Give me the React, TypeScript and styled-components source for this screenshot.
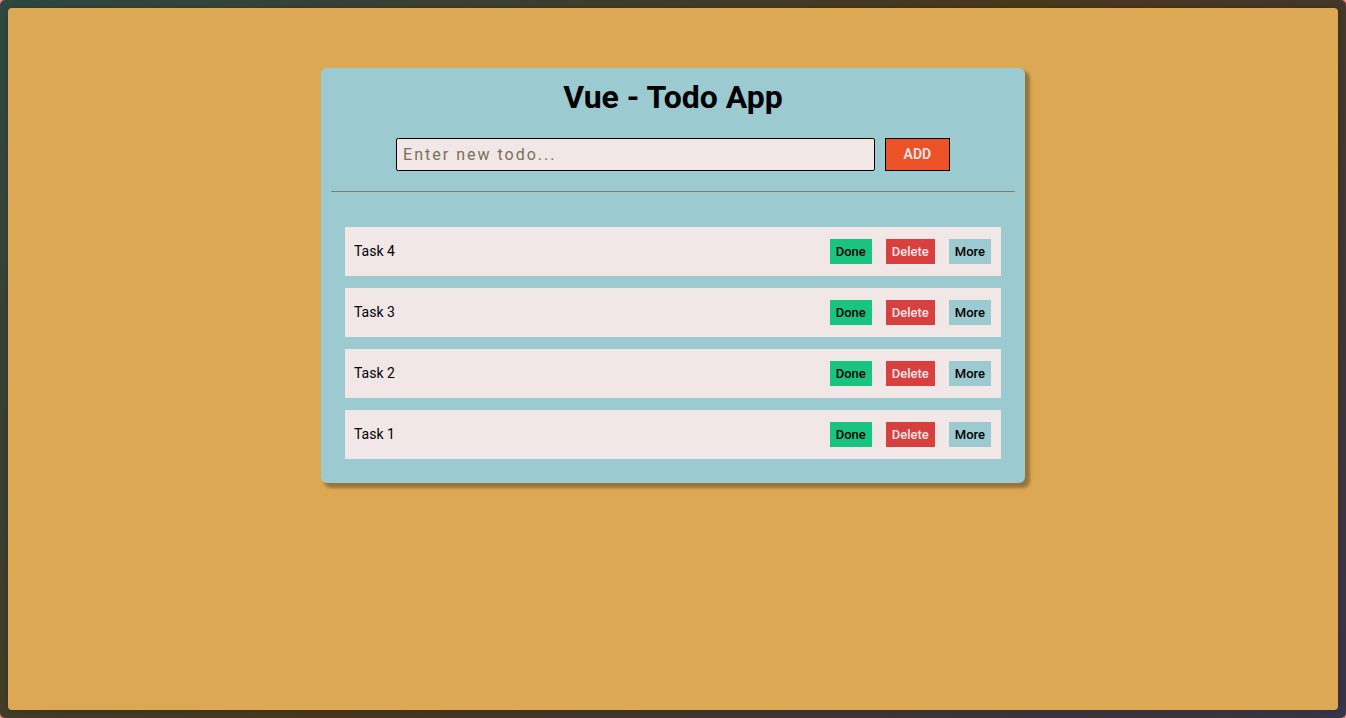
import React from "react";
import styled, { createGlobalStyle } from "styled-components";

const GlobalStyle = createGlobalStyle`
  * { box-sizing: border-box; }
  body {
    margin: 0;
    background: #f28b94;
    font-family: Roboto, "Liberation Sans", sans-serif;
    color: #000;
  }
`;

const Frame = styled.div`
  display: flex;
  min-height: 100vh;
  padding: 8px;
  border-radius: 5px;
  background: linear-gradient(135deg, #2f4842 0%, #4a381c 50%, #39354a 100%);
`;

const Page = styled.main`
  flex: 1;
  padding: 60px 16px;
  border-radius: 4px;
  background: #dca853;
  box-shadow: 0 0 8px rgba(0, 0, 0, 0.2);
`;

const Card = styled.section`
  max-width: 704px;
  margin: 0 auto;
  padding: 10px 10px 24px;
  border-radius: 6px;
  background: #9bcbd0;
  box-shadow: 4px 4px 3px 1px rgba(0, 0, 0, 0.3);
`;

const Title = styled.h1`
  margin: 0;
  font-size: 32px;
  line-height: 38px;
  font-weight: 700;
  text-align: center;
`;

const Form = styled.form`
  display: flex;
  justify-content: center;
  gap: 10px;
  margin: 22px 0 20px;
`;

const TodoInput = styled.input`
  width: 70%;
  height: 33px;
  padding: 0 6px;
  border: 1px solid #000;
  border-radius: 2px;
  background: #f1e7e6;
  font: 400 16px/20px Roboto, "Liberation Sans", sans-serif;
  letter-spacing: 2px;
  &::placeholder { color: #787058; opacity: 1; }
`;

const AddButton = styled.button`
  width: 65px;
  height: 33px;
  padding: 0 0 2px;
  border: 1px solid #000;
  background: #eb5228;
  color: #f1e7e6;
  font: 600 14px/16px Roboto, "Liberation Sans", sans-serif;
`;

const Divider = styled.hr`
  height: 2px;
  margin: 0;
  border: 0;
  border-top: 1px solid #75837f;
  border-bottom: 1px solid #b9c5b0;
`;

const TaskList = styled.ul`
  display: grid;
  gap: 12px;
  margin: 34px 14px 0;
  padding: 0;
  list-style: none;
`;

const Task = styled.li`
  display: flex;
  align-items: center;
  justify-content: space-between;
  height: 49px;
  padding: 0 10px 0 9px;
  background: #f1e7e6;
`;

const TaskName = styled.span`
  padding-bottom: 2px;
  font-size: 14px;
  line-height: 16px;
`;

const Actions = styled.div`
  display: flex;
  gap: 14px;
`;

const ActionButton = styled.button<{ $bg: string; $color?: string }>`
  height: 25px;
  padding: 0 6px;
  border: 0;
  background: ${(p) => p.$bg};
  color: ${(p) => p.$color ?? "#000"};
  font: 500 13px/15px Roboto, "Liberation Sans", sans-serif;
`;

const tasks = ["Task 4", "Task 3", "Task 2", "Task 1"];

export default function App() {
  return (
    <>
      <GlobalStyle />
      <Frame>
        <Page>
          <Card>
            <Title>Vue - Todo App</Title>
            <Form onSubmit={(e) => e.preventDefault()}>
              <TodoInput type="text" aria-label="New todo" placeholder="Enter new todo..." />
              <AddButton type="submit">ADD</AddButton>
            </Form>
            <Divider />
            <TaskList>
              {tasks.map((task) => (
                <Task key={task}>
                  <TaskName>{task}</TaskName>
                  <Actions>
                    <ActionButton type="button" $bg="#18c480">Done</ActionButton>
                    <ActionButton type="button" $bg="#d83f3f" $color="#f1e7e6">Delete</ActionButton>
                    <ActionButton type="button" $bg="#9bcbd0">More</ActionButton>
                  </Actions>
                </Task>
              ))}
            </TaskList>
          </Card>
        </Page>
      </Frame>
    </>
  );
}
